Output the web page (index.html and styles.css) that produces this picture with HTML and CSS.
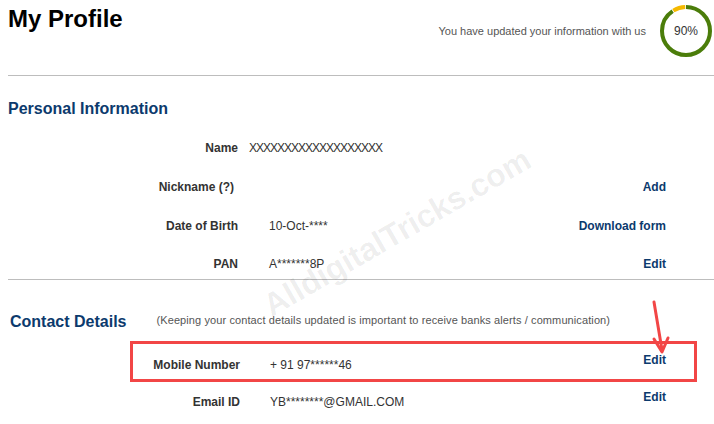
FILE: index.html
```html
<!DOCTYPE html>
<html lang="en">
<head>
  <meta charset="UTF-8" />
  <title>My Profile</title>
  <meta name="viewport" content="width=device-width, initial-scale=1.0" />
  <link rel="stylesheet" href="styles.css">
</head>
<body>
  <div class="page">
    <div class="top">
      <h1>My Profile</h1>
      <div class="progress">
        <span>You have updated your information with us</span>
        <div class="ring">
          <svg width="56" height="56" viewBox="0 0 56 56">
            <circle cx="28" cy="28" r="24" fill="none" stroke="#4b7d0a" stroke-width="4"
              stroke-dasharray="135.7 200" transform="rotate(-90 28 28)" />
            <circle cx="28" cy="28" r="24" fill="none" stroke="#f5b900" stroke-width="4"
              stroke-dasharray="12.5 200" stroke-dashoffset="-136.5" transform="rotate(-90 28 28)" />
          </svg>
          <span class="ring-text">90%</span>
        </div>
      </div>
    </div>

    <!-- Personal -->
    <div class="section personal">
      <h2>Personal Information</h2>
      <div class="rows">
        <div class="row">
          <div class="label">Name</div>
          <div class="value name-value">XXXXXXXXXXXXXXXXXXX</div>
          <div class="action"></div>
        </div>
        <div class="row">
          <div class="label nick">Nickname (?)</div>
          <div class="value"></div>
          <a class="action" href="#">Add</a>
        </div>
        <div class="row">
          <div class="label">Date of Birth</div>
          <div class="value">10-Oct-****</div>
          <a class="action" href="#">Download form</a>
        </div>
        <div class="row">
          <div class="label">PAN</div>
          <div class="value">A*******8P</div>
          <a class="action" href="#">Edit</a>
        </div>
      </div>
    </div>

    <!-- Contact -->
    <div class="section contact">
      <div class="contact-head">
        <h2>Contact Details</h2>
        <p class="note">(Keeping your contact details updated is important to receive banks alerts / communication)</p>
      </div>
      <div class="rows">
        <div class="row marked">
          <div class="label">Mobile Number</div>
          <div class="value">+ 91 97******46</div>
          <a class="action up" href="#">Edit</a>
          <span class="red-box"></span>
          <svg class="arrow" width="30" height="60" viewBox="0 0 30 60">
            <path d="M6 2 L14 50" stroke="#f24646" stroke-width="3" fill="none" stroke-linecap="round" />
            <path d="M6 39 L14 52 L20 38" stroke="#f24646" stroke-width="3" fill="none" stroke-linecap="round" stroke-linejoin="round" />
          </svg>
        </div>
        <div class="row">
          <div class="label">Email ID</div>
          <div class="value">YB********@GMAIL.COM</div>
          <a class="action up" href="#">Edit</a>
        </div>
      </div>
    </div>

    <div class="watermark">AlldigitalTricks.com</div>
  </div>
</body>
</html>
```

FILE: styles.css
```css
body {
  margin: 0;
  font-family: "Liberation Sans", Arial, sans-serif;
  background: #fff;
  color: #333;
}
.page {
  position: relative;
  padding-left: 8px;
  overflow: hidden;
  height: 424px;
}
.top {
  display: flex;
  justify-content: space-between;
  align-items: flex-start;
  height: 75px;
  border-bottom: 1px solid #bdbdbd;
}
h1 {
  margin: 0;
  padding-top: 5px;
  font-size: 24px;
  color: #000;
}
.progress {
  display: flex;
  align-items: center;
  gap: 12px;
  margin-top: 3px;
  font-size: 11px;
  color: #555;
}
.ring {
  position: relative;
  width: 56px;
  height: 56px;
}
.ring svg {
  display: block;
}
.ring-text {
  position: absolute;
  top: 0; left: 0;
  width: 56px;
  line-height: 56px;
  text-align: center;
  font-size: 12px;
  color: #333;
}

h2 {
  margin: 0;
  font-size: 16px;
  color: #0c3a6d;
}
.personal {
  padding-top: 24px;
  border-bottom: 1px solid #bdbdbd;
}
.personal .rows {
  padding-top: 10px;
}
.row {
  display: grid;
  grid-template-columns: 230px 1fr auto;
  column-gap: 31px;
  align-items: center;
  height: 39px;
  padding-right: 48px;
  font-size: 12px;
}
.personal .row:last-child {
  box-sizing: border-box;
  height: 34px;
  padding-top: 3px;
}
.label {
  text-align: right;
  font-weight: bold;
  color: #333;
}
.label.nick {
  margin-right: 4px;
}
.value {
  color: #333;
}
.name-value {
  margin-left: -20px;
  letter-spacing: -1px;
}
.action {
  color: #0c3a6d;
  font-weight: bold;
  text-decoration: none;
}

.contact-head {
  display: flex;
  align-items: center;
  gap: 30px;
  padding: 33px 0 0 2px;
}
.note {
  margin: 0 0 5px;
  font-size: 11px;
  letter-spacing: 0.1px;
  color: #555;
}
.contact .rows {
  padding-top: 15px;
}
.contact .row {
  grid-template-columns: 232px 1fr auto;
  column-gap: 30px;
  height: 37px;
}
.action.up {
  padding-bottom: 10px;
}
.marked {
  position: relative;
}
.red-box {
  position: absolute;
  left: 122px;
  right: 17px;
  top: -5px;
  bottom: 1px;
  border: 3px solid #f24646;
}
.arrow {
  position: absolute;
  left: 640px;
  top: -46px;
}
.watermark {
  position: absolute;
  left: 246px;
  top: 214px;
  font-size: 32px;
  font-weight: bold;
  color: rgba(0, 0, 0, 0.07);
  transform: rotate(-30deg);
  pointer-events: none;
  white-space: nowrap;
}
```
